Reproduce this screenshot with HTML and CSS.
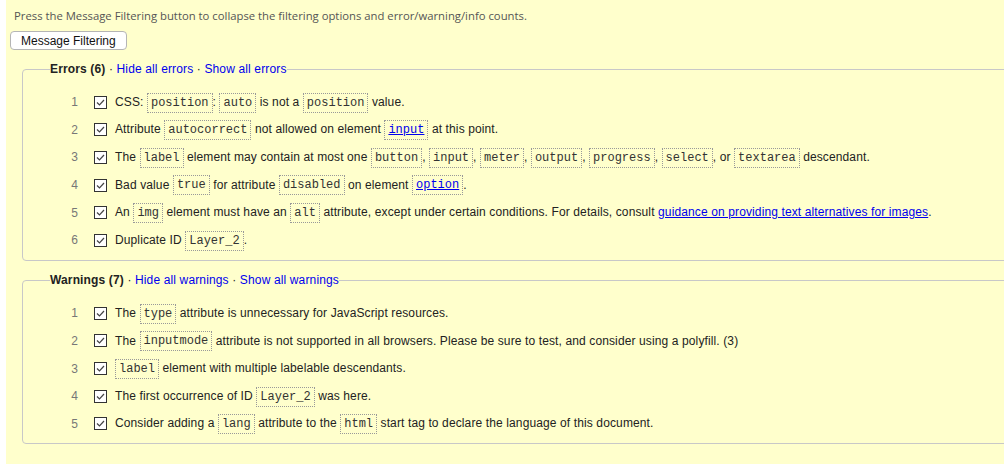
FILE: index.html
```html
<!DOCTYPE html>
<html lang="en">
<head>
<meta charset="utf-8">
<title>Message Filtering</title>
<link rel="stylesheet" href="styles.css">
</head>
<body>
<div class="panel">
  <p class="note">Press the Message Filtering button to collapse the filtering options and error/warning/info counts.</p>
  <button class="filter-btn" type="button">Message Filtering</button>

  <fieldset class="group">
    <legend class="legend"><b>Errors (6)</b> · <a href="#">Hide all errors</a> · <a href="#">Show all errors</a></legend>
    <ol class="rows">
      <li class="row"><span class="num">1</span><svg class="cb" viewBox="0 0 13 13" width="13" height="13"><rect x="0.5" y="0.5" width="12" height="12" fill="#fff" stroke="#333"/><polyline points="3,6.5 5.5,9 10,4" fill="none" stroke="#444" stroke-width="1.2"/></svg><span class="msg">CSS: <code>position</code>: <code>auto</code> is not a <code>position</code> value.</span></li>
      <li class="row"><span class="num">2</span><svg class="cb" viewBox="0 0 13 13" width="13" height="13"><rect x="0.5" y="0.5" width="12" height="12" fill="#fff" stroke="#333"/><polyline points="3,6.5 5.5,9 10,4" fill="none" stroke="#444" stroke-width="1.2"/></svg><span class="msg">Attribute <code>autocorrect</code> not allowed on element <code><a href="#">input</a></code> at this point.</span></li>
      <li class="row"><span class="num">3</span><svg class="cb" viewBox="0 0 13 13" width="13" height="13"><rect x="0.5" y="0.5" width="12" height="12" fill="#fff" stroke="#333"/><polyline points="3,6.5 5.5,9 10,4" fill="none" stroke="#444" stroke-width="1.2"/></svg><span class="msg">The <code>label</code> element may contain at most one <code>button</code>, <code>input</code>, <code>meter</code>, <code>output</code>, <code>progress</code>, <code>select</code>, or <code>textarea</code> descendant.</span></li>
      <li class="row"><span class="num">4</span><svg class="cb" viewBox="0 0 13 13" width="13" height="13"><rect x="0.5" y="0.5" width="12" height="12" fill="#fff" stroke="#333"/><polyline points="3,6.5 5.5,9 10,4" fill="none" stroke="#444" stroke-width="1.2"/></svg><span class="msg">Bad value <code>true</code> for attribute <code>disabled</code> on element <code><a href="#">option</a></code>.</span></li>
      <li class="row"><span class="num">5</span><svg class="cb" viewBox="0 0 13 13" width="13" height="13"><rect x="0.5" y="0.5" width="12" height="12" fill="#fff" stroke="#333"/><polyline points="3,6.5 5.5,9 10,4" fill="none" stroke="#444" stroke-width="1.2"/></svg><span class="msg">An <code>img</code> element must have an <code>alt</code> attribute, except under certain conditions. For details, consult <a href="#">guidance on providing text alternatives for images</a>.</span></li>
      <li class="row"><span class="num">6</span><svg class="cb" viewBox="0 0 13 13" width="13" height="13"><rect x="0.5" y="0.5" width="12" height="12" fill="#fff" stroke="#333"/><polyline points="3,6.5 5.5,9 10,4" fill="none" stroke="#444" stroke-width="1.2"/></svg><span class="msg">Duplicate ID <code>Layer_2</code>.</span></li>
    </ol>
  </fieldset>

  <fieldset class="group">
    <legend class="legend"><b>Warnings (7)</b> · <a href="#">Hide all warnings</a> · <a href="#">Show all warnings</a></legend>
    <ol class="rows">
      <li class="row"><span class="num">1</span><svg class="cb" viewBox="0 0 13 13" width="13" height="13"><rect x="0.5" y="0.5" width="12" height="12" fill="#fff" stroke="#333"/><polyline points="3,6.5 5.5,9 10,4" fill="none" stroke="#444" stroke-width="1.2"/></svg><span class="msg">The <code>type</code> attribute is unnecessary for JavaScript resources.</span></li>
      <li class="row"><span class="num">2</span><svg class="cb" viewBox="0 0 13 13" width="13" height="13"><rect x="0.5" y="0.5" width="12" height="12" fill="#fff" stroke="#333"/><polyline points="3,6.5 5.5,9 10,4" fill="none" stroke="#444" stroke-width="1.2"/></svg><span class="msg">The <code>inputmode</code> attribute is not supported in all browsers. Please be sure to test, and consider using a polyfill. (3)</span></li>
      <li class="row"><span class="num">3</span><svg class="cb" viewBox="0 0 13 13" width="13" height="13"><rect x="0.5" y="0.5" width="12" height="12" fill="#fff" stroke="#333"/><polyline points="3,6.5 5.5,9 10,4" fill="none" stroke="#444" stroke-width="1.2"/></svg><span class="msg"><code>label</code> element with multiple labelable descendants.</span></li>
      <li class="row"><span class="num">4</span><svg class="cb" viewBox="0 0 13 13" width="13" height="13"><rect x="0.5" y="0.5" width="12" height="12" fill="#fff" stroke="#333"/><polyline points="3,6.5 5.5,9 10,4" fill="none" stroke="#444" stroke-width="1.2"/></svg><span class="msg">The first occurrence of ID <code>Layer_2</code> was here.</span></li>
      <li class="row"><span class="num">5</span><svg class="cb" viewBox="0 0 13 13" width="13" height="13"><rect x="0.5" y="0.5" width="12" height="12" fill="#fff" stroke="#333"/><polyline points="3,6.5 5.5,9 10,4" fill="none" stroke="#444" stroke-width="1.2"/></svg><span class="msg">Consider adding a <code>lang</code> attribute to the <code>html</code> start tag to declare the language of this document.</span></li>
    </ol>
  </fieldset>
</div>
</body>
</html>
```
FILE: styles.css
```css
html, body {
  margin: 0;
  padding: 0;
  background: #fff;
  overflow: hidden;
}

.panel {
  margin-left: 6px;
  width: 1100px;
  background: #ffffcc;
  padding: 7px 0 20px 0;
  font-family: "Liberation Sans", Arial, sans-serif;
  font-size: 12px;
  color: #222;
}

.note {
  margin: 0 0 6px 8px;
  font-family: "Open Sans", sans-serif;
  font-size: 11.3px;
  line-height: 18px;
  color: #555;
}

.filter-btn {
  display: block;
  margin: 0 0 11px 4px;
  height: 19px;
  padding: 0 10px;
  font-family: "Liberation Sans", Arial, sans-serif;
  font-size: 12px;
  color: #111;
  background: #fff;
  border: 1px solid #b5b5b5;
  border-radius: 4px;
}

.group {
  margin: 0 0 11.5px 16px;
  padding: 11.5px 0 5.5px 27px;
  border: 1px solid #c8c8c8;
  border-radius: 4px;
}

.group:last-child {
  margin-bottom: 0;
}

.legend {
  padding: 0;
  line-height: 16px;
  color: #222;
  letter-spacing: 0.14px;
}

.legend a {
  color: #0000ee;
  text-decoration: none;
}

.rows {
  list-style: none;
  margin: 0;
  padding: 0;
}

.row {
  display: flex;
  align-items: center;
  height: 27.6px;
}

.num {
  width: 28px;
  text-align: right;
  color: #777;
}

.cb {
  flex: none;
  margin-left: 16px;
  margin-right: 8px;
}

.msg {
  white-space: nowrap;
  line-height: 20px;
  letter-spacing: 0.12px;
}

.msg a {
  color: #0000ee;
  text-decoration: underline;
}

code {
  display: inline-block;
  font-family: "Liberation Mono", "Courier New", monospace;
  font-size: 12px;
  line-height: 16px;
  padding: 1px 3px;
  border: 1px dotted #999;
  color: #333;
  vertical-align: middle;
  letter-spacing: 0;
}
```
